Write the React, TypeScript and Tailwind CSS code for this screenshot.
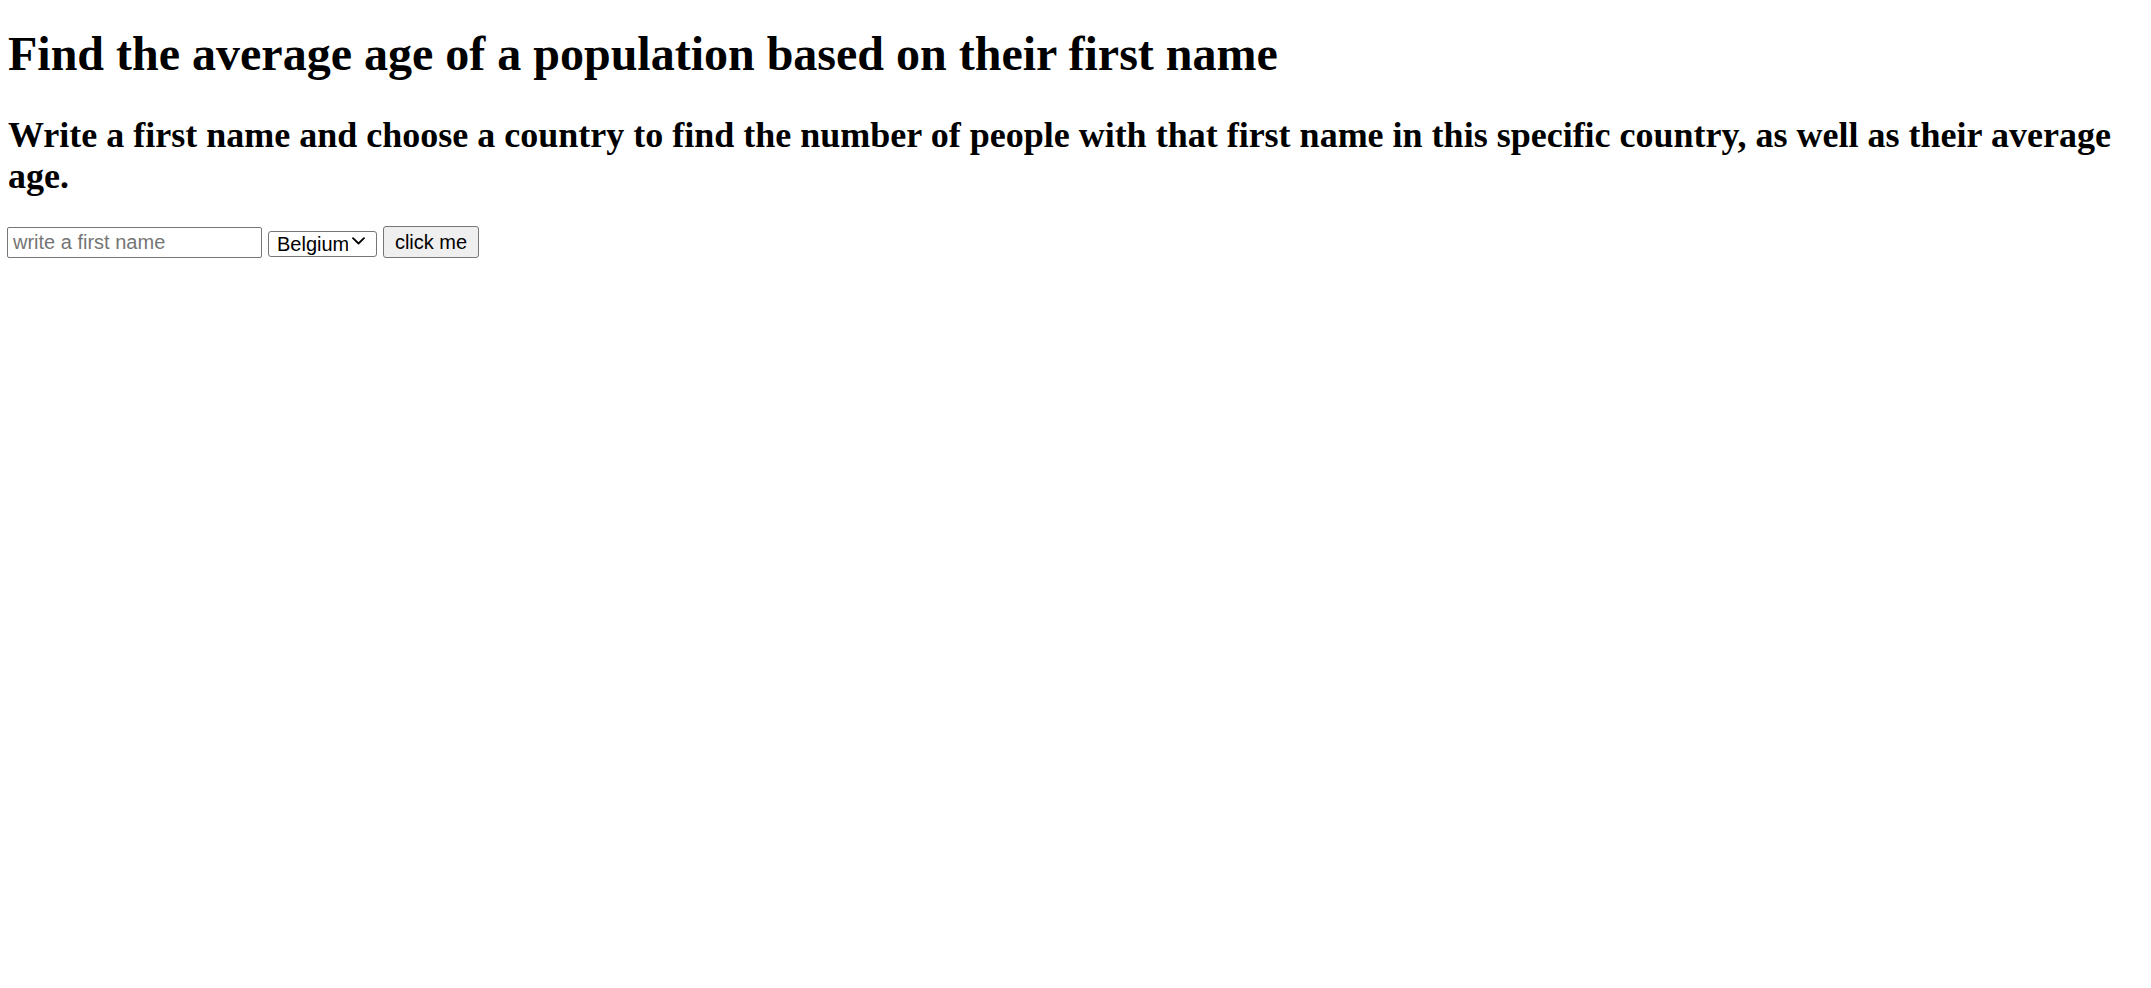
import React from "react";

export default function App() {
  return (
    <div className="min-h-screen bg-white text-black font-['Liberation_Serif','Times_New_Roman',serif]">
      <div className="px-[8px] pt-[26px]">
        <h1 className="text-[48px] font-bold leading-[55px]">
          Find the average age of a population based on their first name
        </h1>
        <h2 className="mt-[34px] text-[36px] font-bold leading-[41px]">
          Write a first name and choose a country to find the number of people with that first name in this specific country, as well as their average age.
        </h2>
      </div>
      <div className="mt-[29px] flex items-center gap-[6px] pl-[7px] font-['Liberation_Sans',Arial,sans-serif] text-[20px]">
        <input
          type="text"
          placeholder="write a first name"
          className="h-[31px] w-[255px] border border-[#767676] bg-white px-[5px] text-[20px] leading-[24px] text-black placeholder:text-[#757575] outline-none rounded-[2px]"
        />
        <div className="relative h-[26px] w-[109px]">
          <select
            defaultValue="Belgium"
            className="h-[26px] w-[109px] appearance-none rounded-[3px] border border-[#767676] bg-white py-0 pl-[8px] pr-[28px] text-[20px] leading-[22px] text-black outline-none"
          >
            <option>Belgium</option>
            <option>France</option>
            <option>Germany</option>
            <option>Netherlands</option>
          </select>
          <svg
            className="pointer-events-none absolute right-[12px] top-[8px]"
            width="13"
            height="8"
            viewBox="0 0 13 8"
            fill="none"
          >
            <path d="M1 1.2 L6.5 6.5 L12 1.2" stroke="#000" strokeWidth="1.8" strokeLinecap="round" strokeLinejoin="round" />
          </svg>
        </div>
        <button className="h-[32px] w-[96px] rounded-[3px] border border-[#767676] bg-[#efefef] text-[20px] leading-[24px] text-black">
          click me
        </button>
      </div>
    </div>
  );
}
